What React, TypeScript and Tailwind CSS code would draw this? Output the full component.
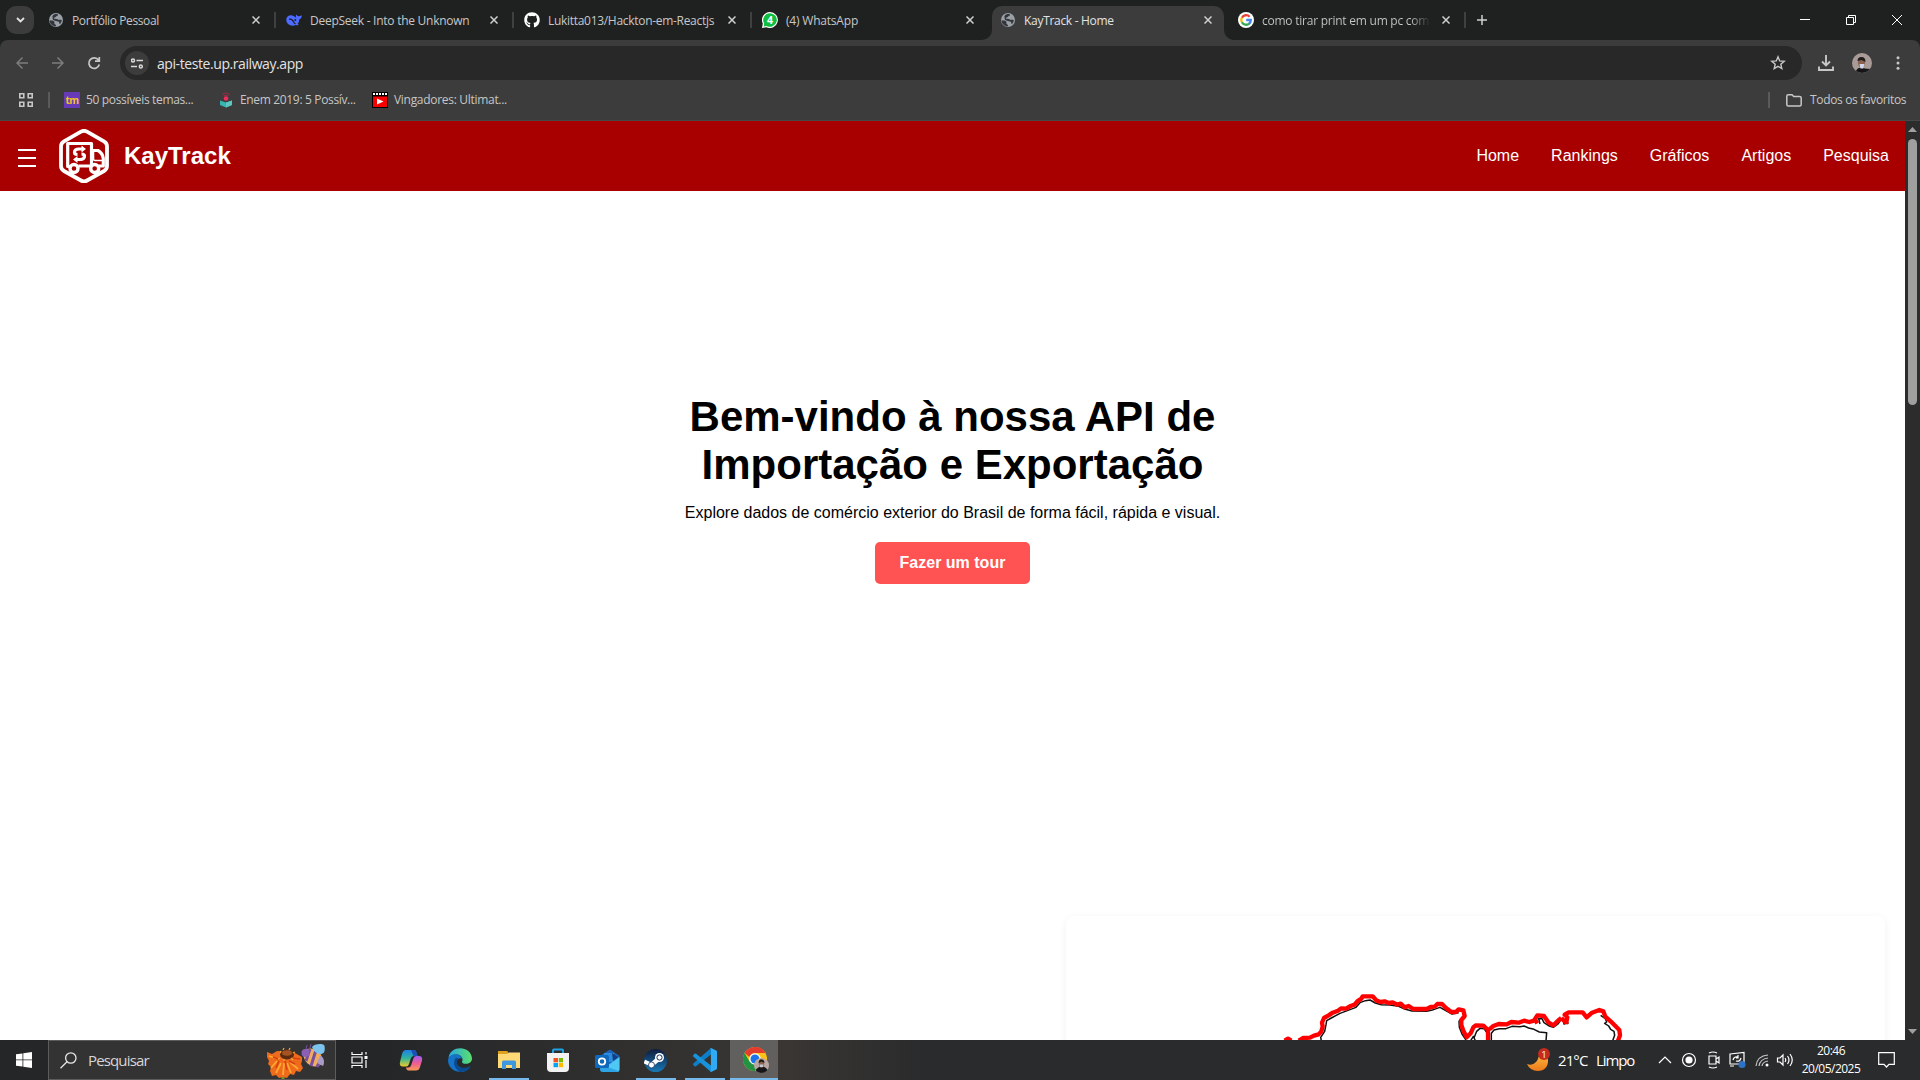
import React from "react";
import { FaGithub } from "react-icons/fa";

const Globe = () => (
  <svg viewBox="0 0 16 16" className="h-4 w-4">
    <circle cx="8" cy="8" r="7" fill="#9aa0a6" />
    <path d="M1.6 8.3c2 .3 3.600 0 4.600 1.100.8.900-.4 1.700.6 2.700.6.700 1.300.500 1.300 2.200C5 14.700 1.500 12 1.600 8.300ZM6 2.400c2.600-.9 4.200-.2 4 .6-.4 1.200-1.600.8-2.100 1.700-.6 1-2 .6-2.100 1.500.2 1 2.700.2 3.700 1.100 1 .9 2.700.2 4.300.7-.2 1.800-1 3.300-2.200 4.200-.5-1-.1-2.100-1.300-2.600C8.300 8.900 5.600 8.700 4.900 7.400 4.300 6.200 5 5.300 4.300 4.400c.4-1 1-1.600 1.700-2Z" fill="#33363a" />
  </svg>
);

const Whale = () => (
  <svg viewBox="0 0 16 16" className="h-4 w-4">
    <path d="M.3 7C.8 3.300 5 2 8 4.200c.8.500 1.500 1.200 2.200 1.700C9.700 4.600 9.800 3.300 10.400 2.600c.3.900 1 1.500 2 1.700 1.100-.1 2-.5 3.300-1.100.2 2.200-.7 3.700-2.500 4.300 0 1.900-.6 3.200-1.600 4.300l1.200 1c-1.100.6-2 .5-3 .1C5.700 15.200-.4 12.500.3 7Z" fill="#4d6bfe" />
    <path d="M3 7.200c2.200-.6 4 .9 5 3.200.4.900.9 1.200 1.500 1.500" fill="none" stroke="#1f2121" strokeWidth="1.200" />
    <circle cx="9.300" cy="8" r="1" fill="#1f2121" />
  </svg>
);

const WhatsApp = () => (
  <svg viewBox="0 0 16 16" className="h-4 w-4">
    <path d="M8 0a8 8 0 1 1-3.600 15.200L0 16l.8-4.400A8 8 0 0 1 8 0Z" fill="#fff" />
    <path d="M8 1.200a6.800 6.800 0 1 1-3.400 12.700L1.700 14.400l.5-2.900A6.800 6.800 0 0 1 8 1.200Z" fill="#0fbd41" />
    <text x="8" y="11.800" textAnchor="middle" fontSize="10.500" fontWeight="700" fill="#fff" fontFamily="Open Sans, sans-serif">4</text>
  </svg>
);

const GoogleMark = () => (
  <svg viewBox="0 0 16 16" className="h-4 w-4">
    <circle cx="8" cy="8" r="8" fill="#fff" />
    <g fill="none" strokeWidth="2.300">
      <path d="M11.600 4.700A4.800 4.800 0 0 0 3.900 5.700" stroke="#ea4335" />
      <path d="M3.900 5.600a4.800 4.800 0 0 0 0 4.700" stroke="#fbbc05" />
      <path d="M3.900 10.200a4.800 4.800 0 0 0 7.300 1.400" stroke="#34a853" />
      <path d="M11 11.800A4.800 4.800 0 0 0 12.800 8H8.200" stroke="#4285f4" />
    </g>
  </svg>
);

const Cross = () => (
  <svg viewBox="0 0 8 8" className="h-2 w-2 shrink-0" stroke="#d0d0d0" strokeWidth="1.500">
    <path d="M.5.5l7 7M7.500.5l-7 7" />
  </svg>
);

type TabProps = { icon: React.ReactNode; title: string; track: string; active?: boolean; line?: boolean };

const Tab = ({ icon, title, track, active, line }: TabProps) => (
  <div className={`relative flex h-10 w-[238px] shrink-0 items-center pl-[10px] ${active ? "text-[#e3e3e3]" : "text-[#c7c7c7]"}`}>
    {active && (
      <svg className="absolute left-[-8px] top-[6px]" width="250" height="34" viewBox="0 0 250 34">
        <path d="M0 34a10 10 0 0 0 10-10V10A10 10 0 0 1 20 0H232a10 10 0 0 1 10 10V24a10 10 0 0 0 10 10Z" fill="#3c3c3c" />
      </svg>
    )}
    <span className="relative">{icon}</span>
    <span className={`relative ml-2 w-[169px] overflow-hidden whitespace-nowrap pt-0.5 text-[12px] leading-5 ${track}`}>{title}</span>
    <span className="relative ml-[11px]"><Cross /></span>
    {line && <span className="ml-auto h-4 w-[2px] bg-[#3f4040]" />}
  </div>
);

const TruckLogo = () => (
  <svg viewBox="0 0 50 54" width="50" height="54" fill="none" stroke="#fff" strokeLinejoin="round">
    <path d="M22 2.700q3-1.800 6 0L45 12.300q3 1.700 3 5V37q0 3.200-3 5L28 51.500q-3 1.800-6 0L5 42q-3-1.800-3-5V17.300q0-3.300 3-5Z" strokeWidth="3.800" />
    <path d="M11 37.500H8.700V14.500H32.500V36M19.500 37H31M33 21.500h6q4.500 2.500 5.300 8V37H40" strokeWidth="3.200" />
    <path d="M34.500 22v8q0 1.500 1.500 1.500h8" strokeWidth="1.600" />
    <circle cx="15" cy="39.500" r="4" strokeWidth="3.400" />
    <circle cx="35.700" cy="39.500" r="4" strokeWidth="3.400" />
    <path d="M24 20h-4q-4.500 0-4.500 3.500 0 2 3 2M17 30.500h4q4.500 0 4.500-3.500 0-2-3-2" strokeWidth="3.200" />
    <path d="M22.500 16.500 27 20l-4.500 3.500ZM18.500 27 14 30.500l4.500 3.500Z" fill="#fff" stroke="none" />
  </svg>
);

const MapOutline = () => (
  <svg width="400" height="70" viewBox="0 0 1200 210" fill="none" strokeLinejoin="round">
    <g stroke="#111" strokeWidth="4.500">
      <polyline points="184,212 182,202 194,184 198,164 200,152 214,144 240,130 262,122 288,112 300,98 316,92 330,90 346,99 364,104 390,105 416,109 434,117 456,123 500,124 520,119 540,112 560,123 576,132 596,128" />
      <polyline points="606,144 597,154 598,172 606,192 618,210" />
      <polyline points="632,212 640,199 646,212" />
      <polyline points="642,204 650,184 660,175 672,176 682,190" />
      <polyline points="694,212 694,190 702,180 718,176 738,176 756,169 780,170 792,168 806,174 822,178 838,186 860,188 858,212" />
      <polyline points="840,162 836,146 846,146 852,158 868,168 880,172 894,162 902,150 910,152 912,162 926,158" />
      <polyline points="1022,136 1036,146 1040,156 1034,160 1046,168 1052,178 1062,184 1064,196 1058,212" />
    </g>
    <g stroke="#f00" strokeWidth="13">
      <polyline points="74,212 84,206 94,212" />
      <polyline points="116,212 130,204 150,203 162,197 176,193 184,184 188,170 186,158 192,144 206,136 218,128 234,122 244,115 258,116 272,108 284,104 292,94 304,86 308,79 338,79 350,92 362,96 374,94 386,99 398,97 412,104 422,101 434,112 446,108 460,117 500,117 512,111 524,110 532,102 546,102 558,114 574,126 588,126 596,118 610,121 614,138 604,150 604,165 610,182 620,202 632,190 640,172 648,166 670,167 684,180 684,212" />
      <polyline points="688,178 700,168 716,162 740,163 754,156 776,158 792,152 808,156 822,152 832,136 852,138 866,158 880,166 894,152 904,144" />
      <polyline points="918,162 922,142 914,134 926,127 968,127 980,142 996,128 1018,120 1030,124 1036,140 1052,154 1064,166 1078,180 1080,196 1074,212" />
      <path d="M832 160l-6-10M904 144l14 14" />
    </g>
  </svg>
);

const Chrome = () => (
  <svg viewBox="0 0 26 26" width="26" height="26">
    <circle cx="12" cy="12" r="12" fill="#fbc116" />
    <path d="M1.600 6A12 12 0 0 1 22.400 6H12a6 6 0 0 0-5.500 4Z" fill="#e33b2e" />
    <path d="M1.600 6A12 12 0 0 0 12 24l5-9-10.200 0Z" fill="#229342" />
    <circle cx="12" cy="12" r="5.800" fill="#fff" />
    <circle cx="12" cy="12" r="4.500" fill="#1a73e8" />
    <circle cx="18.500" cy="18.500" r="7.500" fill="#b9a8a1" />
    <path d="M12.500 23q3-4 6-3.500 4 0 6 3.500a7.500 7.500 0 0 1-12 0Z" fill="#17171a" />
    <ellipse cx="18.500" cy="17" rx="2.700" ry="3.700" fill="#8a6253" />
    <path d="M15.500 16q.5-4 3.200-3.600 2.500 0 2.800 3.600l-3-1.500Z" fill="#1c1816" />
    <path d="M16.500 17.500h4l-.5 2.500h-3z" fill="#c3c9d6" />
  </svg>
);

const Dock = ({ children, on, active }: { children: React.ReactNode; on?: boolean; active?: boolean }) => (
  <div className={`relative flex h-10 items-center justify-center ${active ? "ml-px w-12 bg-[#61605f]" : "w-[49px]"}`}>
    {children}
    {on && <span className={`absolute bottom-0 h-[2px] bg-[#76b9ed] ${active ? "w-full" : "w-10"}`} />}
  </div>
);

const Taskbar = () => (
  <footer className="flex h-10 shrink-0 items-center bg-linear-to-r from-[#242628] from-20% via-[#393633] via-41% to-[#2a2b2c] to-48% text-white">
    <div className="flex w-12 justify-center">
      <svg width="16" height="16" viewBox="0 0 16 16" fill="#fff"><path d="M0 2.300 6.500 1.400v6.100H0ZM7.300 1.300 16 0v7.500H7.300ZM0 8.300h6.500v6.300L0 13.700ZM7.300 8.300H16V16l-8.700-1.200Z" /></svg>
    </div>
    <div className="flex h-10 w-[288px] items-center border border-[#5c5c5c] bg-[#333333] pl-[11px]">
      <svg width="17" height="17" viewBox="0 0 17 17" fill="none" stroke="#e8e8e8" strokeWidth="1.300"><circle cx="10.800" cy="6" r="5.200" /><path d="M7 9.700.5 16.300" /></svg>
      <span className="ml-[11px] w-[179px] text-[15px] tracking-[-0.85px] text-[#d6d6d6]">Pesquisar</span>
      <svg width="60" height="38" viewBox="0 0 60 38">
        <path d="M16 30v8" stroke="#6d9a1f" strokeWidth="3" />
        <path d="M0 11l5 2 5-3 16 1 9 5 0 4-1 3 2 4-3 4-4-1-2 4-4-1-3 4-4-1-4 1-3-3-4 1-2-5 1-4-3-3 1-3-2-4Z" fill="#ee6a1c" />
        <path d="M14 22 9 32M17 22l-1 12M20 22l4 10M23 21l8 7M10 20l-6 7M8 17l-6-2" stroke="#ffa82e" strokeWidth="1.800" />
        <path d="M12 20l-3 7M18 20l2 9M22 20l6 3M6 16l5 2M26 17l7 1" stroke="#d8400f" strokeWidth="1.600" />
        <ellipse cx="20" cy="13.500" rx="7" ry="5" fill="#5b2a0f" />
        <ellipse cx="20" cy="12" rx="5" ry="2.800" fill="#a55322" />
        <path d="M13 12l1-2M16 9l1-2M22 9l1-2M26 12l2-1M13 17l-2 1M17 18v2M24 17l2 2" stroke="#e8a13a" strokeWidth="1.300" />
        <ellipse cx="46" cy="16.500" rx="10.500" ry="8" transform="rotate(40 46 16.500)" fill="#f0ad62" />
        <path d="M43 8l-4 12M49 9l-5 16M55 16l-5 10" stroke="#76509c" strokeWidth="3" />
        <circle cx="38.500" cy="12" r="4" fill="#8b5fb5" />
        <path d="M45 6c2-3.500 12-4 12.500-1 1 6-1 8-4 8-4 0-7-3-8.500-7Z" fill="#7cc4ee" />
        <path d="M53 15c4 1 5 6 3 10l-6-3Z" fill="#a99bc8" />
        <path d="M39 8l1-4M43 7l1-4" stroke="#76509c" />
      </svg>
    </div>
    <div className="flex w-[50px] justify-center pr-[3px]">
      <svg width="17" height="16" viewBox="0 0 17 16" fill="none" stroke="#fff" strokeWidth="1.200"><path d="M1 0v2.500h10V0M1 16v-2.500h10V16M1 5h10v6H1ZM15 0v2.500M15 8v8" /><path d="M13.500 4h3v3h-3z" fill="#fff" stroke="none" /></svg>
    </div>
    <div className="flex">
      <Dock>
        <svg width="24" height="22" viewBox="0 0 24 22">
          <defs>
            <linearGradient id="ca" x2="0" y2="1"><stop stopColor="#1f7fe8" /><stop offset=".5" stopColor="#2fb59b" /><stop offset="1" stopColor="#f2c928" /></linearGradient>
            <linearGradient id="cb" x2="0" y2="1"><stop stopColor="#a05cf0" /><stop offset=".5" stopColor="#ee5d94" /><stop offset="1" stopColor="#f99a53" /></linearGradient>
          </defs>
          <path d="M7 1h8q2 0 2.500 3l1 3h-4q-2 0-2.700 2.500L10 15q-.7 2.500-3 2.500H4q-4 0-3-4.500l2-8Q4 1 7 1Z" fill="url(#ca)" />
          <path d="M17 21.500H9.500q-2 0-2.500-3h2q2.500 0 3.200-2.500l2-6Q15 7 17.500 7H20q4 0 3 4.500l-2 6.500q-1 3.500-4 3.500Z" fill="url(#cb)" />
          <path d="M12 1h3q2 0 2.500 3l1 3h-4Z" fill="#1b4fb5" />
        </svg>
      </Dock>
      <Dock>
        <svg width="24" height="24" viewBox="0 0 24 24">
          <defs><linearGradient id="ea"><stop stopColor="#27a7e5" /><stop offset="1" stopColor="#5be06a" /></linearGradient></defs>
          <path d="M.5 10C2-3 23-3 24 10.500c0 5-6 6.500-9.500 4.500-1-1 0-1.500 0-3.500C14 5 4 5 .5 10Z" fill="url(#ea)" />
          <path d="M0 12C1 5 12 4 14.500 11c-3-2-7 1-5.500 5 1.500 4.500 8 6 13 2.500-3 5-7 6-11 5.300C4 23 0 18 0 12Z" fill="#1573c8" />
          <path d="M8 9.500C5 13 5 20 12 23.900 20 24 22 20 22.500 18 17 21.500 10 19.500 9 15.500c-.5-2 0-4 1.500-4.800Z" fill="#0c4a8f" />
        </svg>
      </Dock>
      <Dock on>
        <svg width="22" height="19" viewBox="0 0 22 19"><path d="M0 0h9l1 2h12v15H0Z" fill="#f3b73a" /><path d="M0 3h9.500l1-1.500H22V17H0Z" fill="#ffd975" /><path d="M0 0h9l1 1.500L9 3H0Z" fill="#dfa01f" /><path d="M4 18v-7q0-1.500 1.500-1.500h11q1.500 0 1.500 1.500v7h-4v-4H8v4Z" fill="#3f97dd" /></svg>
      </Dock>
      <Dock>
        <svg width="24" height="24" viewBox="0 0 24 24"><path d="M7 7V2.500q0-1 1-1h8q1 0 1 1V7" fill="none" stroke="#1fa3e6" strokeWidth="2" /><path d="M1 5h22v15q0 4-4 4H5q-4 0-4-4Z" fill="#f2f2f2" /><path d="M7.500 10H12v4.300H7.500z" fill="#f25022" /><path d="M12.800 10H17v4.300h-4.200z" fill="#7fba00" /><path d="M7.500 15H12v4.200H7.500z" fill="#00a4ef" /><path d="M12.800 15H17v4.200h-4.200z" fill="#ffb900" /></svg>
      </Dock>
      <Dock>
        <svg className="ml-0.5" width="25" height="23" viewBox="0 0 25 23"><path d="M5 7 14 1q1-.6 2 0l8.500 6v13q0 3-3 3H8q-3 0-3-3Z" fill="#1a63b8" /><path d="M9 4h10v9H9z" fill="#2b8be0" /><path d="m9 19 15.500-11v12q0 3-3 3H8Z" fill="#4fc9f3" /><path d="m17 4 6 4-5 4Z" fill="#123f7d" /><path d="M6 16l18 6q-1 1-3 1H8q-3 0-3-3Z" fill="#2fa4e4" /><rect y="6" width="14" height="13" rx="1.500" fill="#1068bd" /><circle cx="7" cy="12.500" r="3.200" fill="none" stroke="#fff" strokeWidth="1.800" /></svg>
      </Dock>
      <Dock on>
        <svg width="23" height="23" viewBox="0 0 23 23"><defs><linearGradient id="st" x2="0" y2="1"><stop stopColor="#0e1b3c" /><stop offset="1" stopColor="#1878b5" /></linearGradient></defs><circle cx="11.500" cy="11.500" r="11.500" fill="url(#st)" /><path d="M.3 12.500 7 15.500" stroke="#fff" strokeWidth="4" /><path d="m8.500 15 7-6" stroke="#fff" strokeWidth="4.500" /><circle cx="15.500" cy="8.500" r="4.500" fill="#fff" /><circle cx="15.500" cy="8.500" r="2.600" fill="#fff" stroke="#15305c" strokeWidth="1" /><circle cx="7.500" cy="16" r="3" fill="#fff" stroke="#15305c" strokeWidth=".8" /></svg>
      </Dock>
      <Dock on>
        <svg width="24" height="24" viewBox="0 0 24 24"><path d="M18 0v6.500L3 18.200q-.8.500-1.500 0L.3 17q-.6-.8 0-1.500Z" fill="#0d7fc9" /><path d="M18 24v-6.500L3 5.800q-.8-.5-1.500 0L.3 7q-.6.800 0 1.500Z" fill="#1793de" /><path d="M17 .3q.8-.5 1.600-.1l4.600 2.200q.8.400.8 1.300v16.600q0 .9-.8 1.300l-4.600 2.200q-.9.400-1.600-.1.900.3.900-1V1.300q0-1.200-.9-1Z" fill="#30aaf2" /></svg>
      </Dock>
      <Dock on active><span className="pl-1"><Chrome /></span></Dock>
    </div>
    <div className="ml-auto flex h-10 items-center">
      <svg width="24" height="26" viewBox="0 0 24 26"><defs><linearGradient id="mo" x2="0" y2="1"><stop stopColor="#ffbe3d" /><stop offset="1" stopColor="#ec7a1c" /></linearGradient></defs><path d="M0 17q9 3 12-8l6-3c6 7 3 18-7 18Q3 24 0 17Z" fill="url(#mo)" /><circle cx="17" cy="7" r="6" fill="#c42b1c" /><text x="17" y="10.500" fontSize="9.500" textAnchor="middle" fill="#fff" fontFamily="Open Sans, sans-serif">1</text></svg>
      <span className="ml-[7px] w-[38px] whitespace-nowrap text-[15px] tracking-[-0.9px]">21°C</span>
      <span className="w-[61px] whitespace-nowrap text-[15px] tracking-[-1.1px]">Limpo</span>
      <svg className="ml-[1px]" width="138" height="20" viewBox="0 0 138 20" fill="none" stroke="#fff" strokeWidth="1.200">
        <path d="m1 13 6-6 6 6" />
        <circle cx="31" cy="10" r="6.500" /><circle cx="31" cy="10" r="3.600" fill="#fff" stroke="none" />
        <path d="M51 6h7v8h-7ZM58 9l3-2v6l-3-2M51 3q4-2 8 0M51 17q4 2 8 0" />
        <path d="m72 4 14-1.500V14l-14 0ZM72 16h4" /><path d="M75 10q1-4 5-3M83 8q-1 4-5 3M80 5v3h-2" /><circle cx="84" cy="14.500" r="3.600" fill="#2d72c4" stroke="none" />
        <path d="M98 16q1-10 12-11M101 16q1-7 9-8M104 16q.5-4 6-5" stroke="#c8c8c8" /><circle cx="109" cy="15" r="1.500" fill="#fff" stroke="none" />
        <path d="M119.500 8h2.500l3-3v10l-3-3h-2.500ZM127 8q1.500 2 0 4M129.500 6q3 4 0 8M132 4q4.500 6 0 12" />
      </svg>
      <div className="ml-[4px] flex w-[62px] flex-col items-center whitespace-nowrap text-[12px] leading-[18px] tracking-[-0.52px]"><span>20:46</span><span>20/05/2025</span></div>
      <svg className="ml-[16px] mr-[25px]" width="17" height="17" viewBox="0 0 17 17" fill="none" stroke="#fff" strokeWidth="1.200"><path d="M.7.700h15.600v11.600H11L8.500 15 6 12.300H.7Z" /></svg>
    </div>
  </footer>
);

const nav = ["Home", "Rankings", "Gráficos", "Artigos", "Pesquisa"];

export default function App() {
  return (
    <div className="flex h-[1080px] w-[1920px] flex-col overflow-hidden bg-white font-['Open_Sans',sans-serif]">
      <div className="flex h-10 shrink-0 items-center bg-[#1f2121] pl-[6px]">
        <div className="mr-1 flex h-7 w-7 items-center justify-center rounded-[10px] bg-[#3c3c3c]">
          <svg width="9" height="6" viewBox="0 0 9 6" fill="none" stroke="#e3e3e3" strokeWidth="1.800"><path d="m1 1 3.500 3.500L8 1" /></svg>
        </div>
        <Tab icon={<Globe />} title="Portfólio Pessoal" track="tracking-[-0.4px]" line />
        <Tab icon={<Whale />} title="DeepSeek - Into the Unknown" track="tracking-[-0.26px]" line />
        <Tab icon={<FaGithub className="h-4 w-4 text-white" />} title="Lukitta013/Hackton-em-Reactjs" track="tracking-[-0.3px]" line />
        <Tab icon={<WhatsApp />} title="(4) WhatsApp" track="tracking-[-0.2px]" />
        <Tab icon={<Globe />} title="KayTrack - Home" track="tracking-[-0.3px]" active />
        <Tab icon={<GoogleMark />} title="como tirar print em um pc com" track="tracking-[-0.24px] bg-linear-to-r from-[#c7c7c7] from-88% to-[#1f2121] to-100% bg-clip-text text-transparent" line />
        <svg className="ml-[11px]" width="10" height="10" viewBox="0 0 10 10" stroke="#d0d0d0" strokeWidth="1.500"><path d="M5 0v10M0 5h10" /></svg>
        <svg className="ml-auto mr-[17px]" width="104" height="12" viewBox="0 0 104 12" fill="none" stroke="#fff" strokeWidth="1"><path d="M1 5.500h10M47.500 3.500h7v7h-7ZM49.500 3.500v-2h7v7h-2M93 1l10 10M103 1 93 11" /></svg>
      </div>

      <div className="h-[81px] shrink-0 bg-[#1f2121]">
        <div className="h-full rounded-t-[8px] border-b border-[#474747] bg-[#3c3c3c]">
          <div className="flex h-10 items-center pt-[6px]">
            <svg className="ml-4" width="86" height="14" viewBox="0 0 86 14" fill="none" strokeWidth="1.500"><path d="M12 7H1M6.500 1.500 1 7l5.500 5.500M36 7h11M41.500 1.500 47 7l-5.500 5.500" stroke="#7c7c7c" /><path d="M82.500 4A5.300 5.300 0 1 0 83.300 8.500M83.300 1v4.200H79" stroke="#c7c7c7" strokeWidth="1.700" /></svg>
            <div className="ml-[18px] flex h-[34px] w-[1682px] items-center rounded-full bg-[#282828] pl-[5px] pr-4">
              <span className="flex h-6 w-6 items-center justify-center rounded-full bg-[#3c3c3c]">
                <svg width="12" height="11" viewBox="0 0 12 11" fill="none" stroke="#d8d8d8" strokeWidth="1.500"><circle cx="2" cy="2.500" r="1.500" /><path d="M5.500 2.500H12M0 8.500h6" /><circle cx="9.800" cy="8.500" r="1.500" /></svg>
              </span>
              <span className="ml-2 text-[14px] tracking-[-0.42px] text-[#e3e3e3]">api-teste.up.railway.app</span>
              <svg className="ml-auto" width="16" height="16" viewBox="0 0 16 16" fill="none" stroke="#c7c7c7" strokeWidth="1.400"><path d="m8 1.800 1.700 4.100 4.500.4-3.400 2.900 1 4.400L8 11.300l-3.800 2.300 1-4.400L1.800 6.300l4.500-.4Z" /></svg>
            </div>
            <svg className="ml-4" width="16" height="16" viewBox="0 0 16 16" fill="none" stroke="#c7c7c7" strokeWidth="1.900"><path d="M8 0v10M4 6.500l4 4 4-4M1 11.500V15h14v-3.500" /></svg>
            <svg className="ml-[18px]" width="20" height="20" viewBox="0 0 20 20"><defs><clipPath id="av"><circle cx="10" cy="10" r="10" /></clipPath></defs><g clipPath="url(#av)"><path d="M0 0h20v20H0z" fill="#a99c98" /><path d="M3 20q2-6 7-5t9 1v4Z" fill="#151518" /><ellipse cx="9.500" cy="9.500" rx="3.600" ry="5" fill="#8b6252" /><path d="M5.500 8q0-4 4-4t4 5l-4-2Z" fill="#211b1a" /><path d="M7.500 11h5l-1.500 4.500H8.500Z" fill="#d3d9ea" /></g></svg>
            <svg className="ml-[24px]" width="4" height="14" viewBox="0 0 4 14" fill="#c7c7c7"><circle cx="2" cy="1.800" r="1.500" /><circle cx="2" cy="7" r="1.500" /><circle cx="2" cy="12.200" r="1.500" /></svg>
          </div>
          <div className="flex h-10 items-center text-[12px] tracking-[-0.34px] text-[#c7c7c7]">
            <svg className="ml-[19px]" width="14" height="14" viewBox="0 0 14 14" fill="none" stroke="#c7c7c7" strokeWidth="1.600"><path d="M.8.800h4v4h-4ZM9.200.800h4v4h-4ZM.8 9.200h4v4h-4ZM9.200 9.200h4v4h-4Z" /></svg>
            <span className="ml-[15px] h-4 w-[2px] bg-[#5a5a5a]" />
            <span className="ml-[14px] flex h-4 w-4 items-center justify-center bg-[#673ab7] text-[10px] leading-none font-bold tracking-[-0.6px] text-[#f2c230]">tm</span>
            <span className="ml-[6px] w-[132px] whitespace-nowrap">50 possíveis temas...</span>
            <svg width="16" height="16" viewBox="0 0 16 16"><path d="M2 8.500 8 10.500l6-2V13l-6 2.500L2 13Z" fill="#37b5b0" /><path d="M8 10.500l6-2V13l-6 2.500Z" fill="#5cc7c0" /><circle cx="8" cy="6.500" r="2.300" fill="#ee2e5d" /><path d="M4.500 2.500q3.500-3 7 0M6 4q2-1.500 4 0" fill="none" stroke="#9d2b4a" strokeWidth="1.200" /></svg>
            <span className="ml-[6px] w-[132px] whitespace-nowrap">Enem 2019: 5 Possív...</span>
            <svg width="16" height="16" viewBox="0 0 16 16"><path d="M0 0h16v16H0z" fill="#000" /><path d="M1 4.500h14V15H1z" fill="#f60000" /><path d="M1 1h2v2H1zM4 1h2v2H4zM7 1h2v2H7zM10 1h2v2h-2zM13 1h2v2h-2z" fill="#fff" /><path d="m5 6.500 6.500 3L5 12.500Z" fill="#fff" /></svg>
            <span className="ml-[6px] whitespace-nowrap tracking-[-0.3px]">Vingadores: Ultimat...</span>
            <span className="ml-auto h-4 w-[2px] bg-[#5a5a5a]" />
            <svg className="ml-4" width="16" height="13" viewBox="0 0 16 13" fill="none" stroke="#c7c7c7" strokeWidth="1.500"><path d="M.8 2.300Q.8.800 2.300.800H6l1.700 1.800h6q1.500 0 1.500 1.500v6.500q0 1.500-1.500 1.500H2.300Q.8 12.100.8 10.600Z" /></svg>
            <span className="ml-2 mr-[14px] w-24 whitespace-nowrap">Todos os favoritos</span>
          </div>
        </div>
      </div>

      <div className="flex h-[919px] shrink-0 font-['Liberation_Sans',Arial,sans-serif]">
        <main className="flex w-[1905px] flex-col overflow-hidden">
          <header className="flex h-[70px] shrink-0 items-center bg-[#a80000] px-4 text-white">
            <div className="ml-[2px] mt-[3px] flex w-[18px] flex-col gap-[6px]">
              <span className="h-[2px] bg-white" /><span className="h-[2px] bg-white" /><span className="h-[2px] bg-white" />
            </div>
            <div className="ml-[23px]"><TruckLogo /></div>
            <span className="ml-[15px] text-[24px] font-bold">KayTrack</span>
            <nav className="ml-auto flex gap-8 text-[16px]">
              {nav.map((n) => <a key={n}>{n}</a>)}
            </nav>
          </header>
          <section className="flex h-[725px] shrink-0 flex-col items-center pt-[202px] text-black">
            <h1 className="text-center text-[42px] font-bold leading-[48px]">Bem-vindo à nossa API de<br />Importação e Exportação</h1>
            <p className="mt-3 text-[16px] leading-6">Explore dados de comércio exterior do Brasil de forma fácil, rápida e visual.</p>
            <button className="mt-[17px] h-[42px] w-[155px] rounded-[5px] bg-[#ff5252] text-[16px] font-bold text-white">Fazer um tour</button>
          </section>
          <section className="ml-[1066px] h-[300px] w-[819px] shrink-0 rounded-[8px] bg-white pl-[194px] pt-[54px] shadow-[0_2px_8px_rgba(0,0,0,0.06)]">
            <MapOutline />
          </section>
        </main>
        <aside className="flex w-[15px] flex-col items-center bg-[#2c2c2c] py-[6px]">
          <svg width="9" height="5" viewBox="0 0 9 5" fill="#9f9f9f"><path d="M0 5 4.500 0 9 5Z" /></svg>
          <span className="mt-[7px] h-[266px] w-[9px] rounded-full bg-[#9f9f9f]" />
          <svg className="mt-auto" width="9" height="5" viewBox="0 0 9 5" fill="#9f9f9f"><path d="M0 0h9L4.500 5Z" /></svg>
        </aside>
      </div>
      <Taskbar />
    </div>
  );
}
